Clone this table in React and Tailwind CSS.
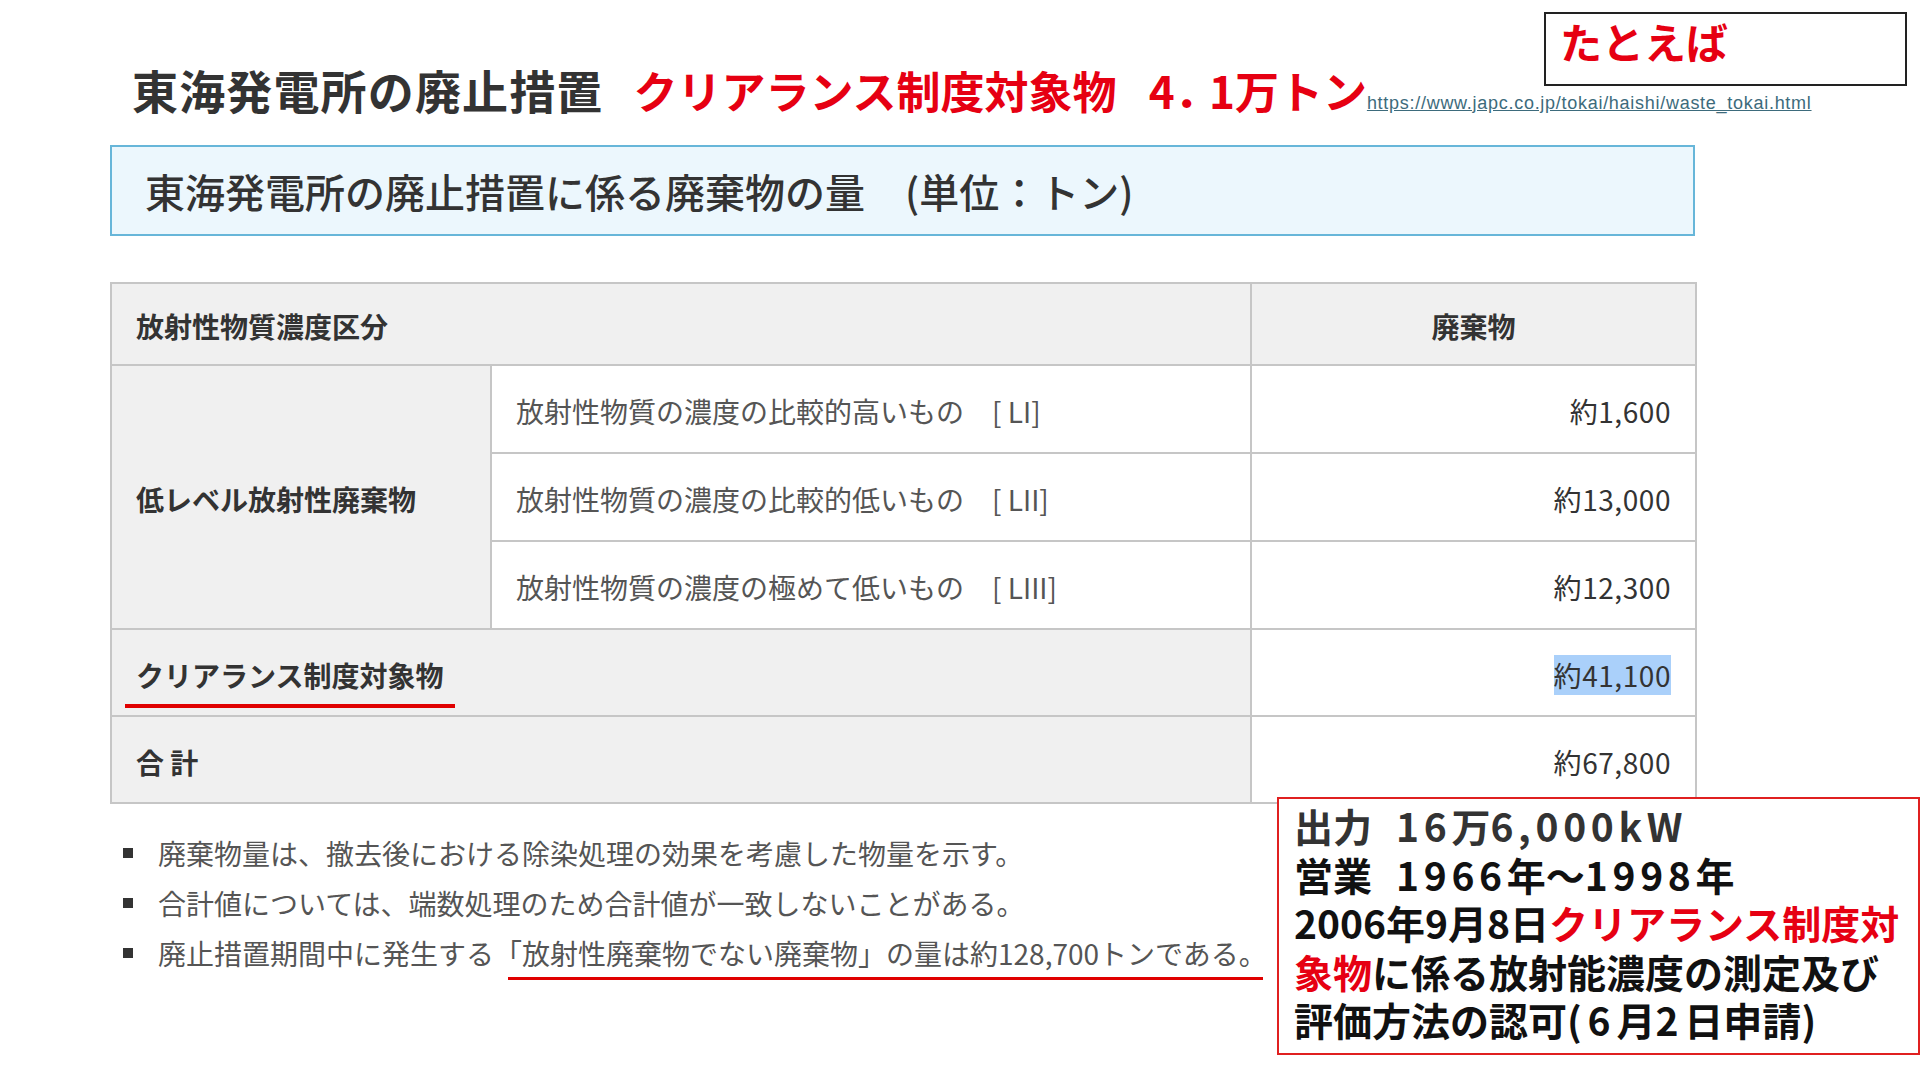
export default function App() {
  const cell = "border-2 border-[#c6c6c6] px-[24px] pt-[4px] text-[28px] text-[#333]";
  const w = "tracking-[0.12em]";
  return (
    <div className="relative w-[1920px] h-[1080px] bg-white overflow-hidden font-['Noto_Sans_CJK_JP',sans-serif]">
      {/* Title row */}
      <div className="flex items-baseline pl-[132px] pt-[66px] whitespace-nowrap">
        <h1 className="text-[46px] font-bold leading-none text-[#333] tracking-[0.025em]">東海発電所の廃止措置</h1>
        <span className="ml-[30px] text-[44px] font-bold leading-none text-[#e60012]">クリアランス制度対象物</span>
        <span className="ml-[32px] text-[44px] font-bold leading-none text-[#e60012]">4<span className="tracking-[-0.22em]">．</span>1万トン</span>
        <a className="ml-[0px] text-[18px] leading-none tracking-[0.04em] text-[#3d6b7c] underline font-['Liberation_Sans',sans-serif]">https://www.japc.co.jp/tokai/haishi/waste_tokai.html</a>
      </div>

      {/* Blue caption */}
      <div className="ml-[110px] mt-[33px] w-[1585px] h-[91px] bg-[#ecf7fd] border-2 border-[#67b6d9] flex items-center pl-[33px]">
        <span className="text-[40px] text-[#333] font-medium leading-none">東海発電所の廃止措置に係る廃棄物の量　(単位：トン)</span>
      </div>

      {/* Table */}
      <table className="ml-[110px] mt-[46px] w-[1585px] table-fixed border-collapse">
        <colgroup>
          <col className="w-[380px]" />
          <col className="w-[760px]" />
          <col className="w-[445px]" />
        </colgroup>
        <tbody>
          <tr className="h-[82px] bg-[#f0f0f0]">
            <th colSpan={2} className={`${cell} text-left font-bold`}>放射性物質濃度区分</th>
            <th className={`${cell} text-center font-bold`}>廃棄物</th>
          </tr>
          <tr className="h-[88px]">
            <td rowSpan={3} className={`${cell} bg-[#f0f0f0] font-bold`}>低レベル放射性廃棄物</td>
            <td className={`${cell} bg-white text-[#555]`}>放射性物質の濃度の比較的高いもの　[ LI]</td>
            <td className={`${cell} bg-white text-right tracking-[0.02em]`}>約1,600</td>
          </tr>
          <tr className="h-[88px]">
            <td className={`${cell} bg-white text-[#555]`}>放射性物質の濃度の比較的低いもの　[ LII]</td>
            <td className={`${cell} bg-white text-right tracking-[0.02em]`}>約13,000</td>
          </tr>
          <tr className="h-[88px]">
            <td className={`${cell} bg-white text-[#555]`}>放射性物質の濃度の極めて低いもの　[ LIII]</td>
            <td className={`${cell} bg-white text-right tracking-[0.02em]`}>約12,300</td>
          </tr>
          <tr className="h-[87px]">
            <td colSpan={2} className={`${cell} bg-[#f0f0f0] font-bold`}>
              <span className="relative">
                クリアランス制度対象物
                <span className="absolute left-[-11px] right-[-12px] bottom-[-13px] h-[4px] bg-[#e00000]"></span>
              </span>
            </td>
            <td className={`${cell} bg-white text-right tracking-[0.02em]`}>
              <span className="bg-[#aad0fa]">約41,100</span>
            </td>
          </tr>
          <tr className="h-[87px]">
            <td colSpan={2} className={`${cell} bg-[#f0f0f0] font-bold`}>合 計</td>
            <td className={`${cell} bg-white text-right tracking-[0.02em]`}>約67,800</td>
          </tr>
        </tbody>
      </table>

      {/* Notes */}
      <ul className="ml-[123px] mt-[24px] text-[28px] leading-[50px] text-[#555]">
        <li className="flex items-center">
          <span className="w-[10px] h-[10px] bg-[#333] mr-[25px]"></span>
          <span>廃棄物量は、撤去後における除染処理の効果を考慮した物量を示す。</span>
        </li>
        <li className="flex items-center">
          <span className="w-[10px] h-[10px] bg-[#333] mr-[25px]"></span>
          <span>合計値については、端数処理のため合計値が一致しないことがある。</span>
        </li>
        <li className="flex items-center whitespace-nowrap">
          <span className="w-[10px] h-[10px] bg-[#333] mr-[25px]"></span>
          <span>
            廃止措置期間中に発生する
            <span className="relative">
              「放射性廃棄物でない廃棄物」の量は約128,700トンである。
              <span className="absolute left-[14px] right-[4px] bottom-[-7px] h-[3px] bg-[#e00000]"></span>
            </span>
          </span>
        </li>
      </ul>

      {/* たとえば box */}
      <div className="absolute left-[1544px] top-[12px] w-[363px] h-[74px] border-2 border-[#222] bg-white pl-[14px] pt-[6px]">
        <span className="text-[42px] font-bold leading-none text-[#e60012]">たとえば</span>
      </div>

      {/* Red annotation box */}
      <div className="absolute left-[1277px] top-[797px] w-[643px] h-[258px] border-2 border-[#e02020] bg-white pl-[15px] pt-[2px] text-[39px] font-bold leading-[48.5px] whitespace-nowrap">
        <div className="text-[#333]">出力<span className="ml-[24px]"><span className={w}>16</span>万<span className={w}>6,000kW</span></span></div>
        <div className="text-[#111]">営業<span className="ml-[24px]"><span className={w}>1966</span>年～<span className={w}>1998</span>年</span></div>
        <div className="text-[#111]">2006年9月8日<span className="text-[#e60012]">クリアランス制度対</span></div>
        <div className="text-[#111]"><span className="text-[#e60012]">象物</span>に係る放射能濃度の測定及び</div>
        <div className="text-[#111]">評価方法の認可<span className="tracking-[0.15em]">(6</span>月<span className="tracking-[0.15em]">2</span>日申請<span className="tracking-[0.15em]">)</span></div>
      </div>
    </div>
  );
}
